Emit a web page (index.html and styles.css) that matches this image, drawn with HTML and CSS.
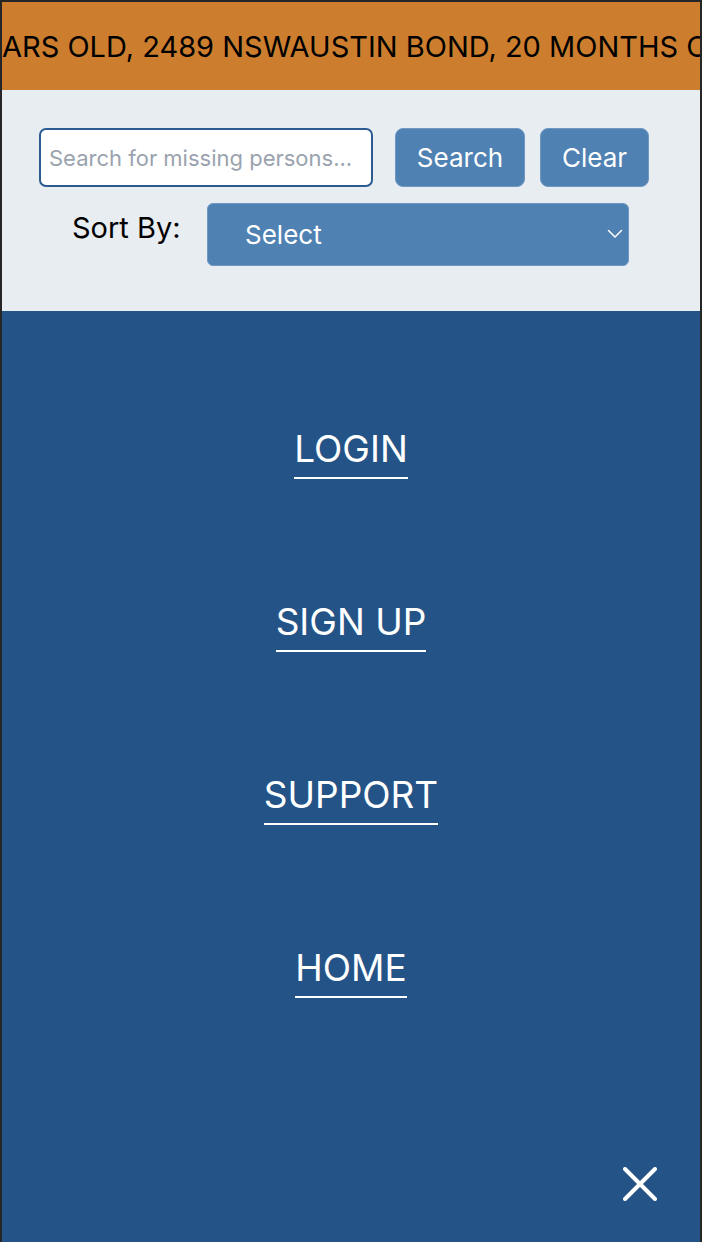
FILE: index.html
```html
<!DOCTYPE html>
<html lang="en">
<head>
<meta charset="utf-8">
<title>Missing Persons</title>
<link rel="stylesheet" href="styles.css">
</head>
<body>
<div class="frame">
  <div class="ticker"><span class="ticker-text">ARS OLD, 2489 NSWAUSTIN BOND, 20 MONTHS OLD, 2170 NSW</span></div>
  <div class="controls">
    <div class="search-row">
      <input class="search-input" type="text" placeholder="Search for missing persons...">
      <button class="btn btn-search">Search</button>
      <button class="btn btn-clear">Clear</button>
    </div>
    <div class="sort-row">
      <span class="sort-label">Sort By:</span>
      <div class="select">
        <span>Select</span>
        <svg class="chev" width="16" height="10" viewBox="0 0 16 10"><path d="M1.5 1.5 L8 8 L14.5 1.5" fill="none" stroke="#fff" stroke-width="1.5" stroke-linecap="round" stroke-linejoin="round"/></svg>
      </div>
    </div>
  </div>
  <nav class="menu">
    <a class="menu-link" href="#">LOGIN</a>
    <a class="menu-link" href="#">SIGN UP</a>
    <a class="menu-link" href="#">SUPPORT</a>
    <a class="menu-link" href="#">HOME</a>
    <button class="close" aria-label="Close">
      <svg width="34" height="34" viewBox="0 0 34 34"><path d="M2 2 L32 32 M32 2 L2 32" stroke="#fff" stroke-width="4" stroke-linecap="round"/></svg>
    </button>
  </nav>
</div>
</body>
</html>
```
FILE: styles.css
```css
html, body {
  margin: 0;
  padding: 0;
  height: 100%;
}
body {
  background: #262626;
  font-family: Inter, "Noto Sans", sans-serif;
}
.frame {
  box-sizing: border-box;
  min-height: 100%;
  padding: 2px 2px 0 2px;
  display: flex;
  flex-direction: column;
}
.ticker {
  background: #cc7e2e;
  height: 88px;
  overflow: hidden;
  white-space: nowrap;
  display: flex;
  align-items: center;
}
.ticker-text {
  font-size: 29px;
  color: #000;
  padding-top: 1px;
}
.controls {
  background: #e8edf2;
  padding: 38px 0 45px 37px;
  display: flex;
  flex-direction: column;
  gap: 16px;
}
.search-row {
  display: flex;
  align-items: center;
}
.search-input {
  box-sizing: border-box;
  width: 334px;
  height: 59px;
  border: 2px solid #2b5b90;
  border-radius: 7px;
  background: #fff;
  padding: 0 0 0 8px;
  font-family: Inter, "Noto Sans", sans-serif;
  font-size: 22px;
  outline: none;
}
.search-input::placeholder {
  color: #9aa3ae;
}
.btn {
  height: 59px;
  border: 1px solid #6e97c2;
  border-radius: 8px;
  background: #4f81b3;
  color: #fff;
  font-family: Inter, "Noto Sans", sans-serif;
  font-size: 26px;
  padding: 0;
}
.btn-search {
  width: 130px;
  margin-left: 22px;
}
.btn-clear {
  width: 109px;
  margin-left: 15px;
}
.sort-row {
  display: flex;
  align-items: center;
  padding-left: 33px;
}
.sort-label {
  font-size: 29px;
  color: #000;
  margin-bottom: 14px;
  width: 135px;
}
.select {
  box-sizing: border-box;
  width: 422px;
  height: 63px;
  border-radius: 6px;
  background: #4f81b3;
  border: 1px solid #6e97c2;
  color: #fff;
  font-size: 26px;
  display: flex;
  align-items: center;
  justify-content: space-between;
  padding: 0 5px 0 37px;
}
.chev {
  display: block;
  margin-top: -1px;
}
.menu {
  flex: 1;
  background: #245487;
  display: flex;
  flex-direction: column;
  align-items: center;
  padding-top: 120px;
  gap: 125px;
}
.menu-link {
  color: #fff;
  text-decoration: none;
  font-size: 37px;
  line-height: 36px;
  padding-bottom: 10px;
  border-bottom: 2px solid #fff;
}
.close {
  margin-top: auto;
  align-self: flex-end;
  margin-right: 43px;
  margin-bottom: 41px;
  background: none;
  border: 0;
  padding: 0;
  width: 34px;
  height: 34px;
}
.close svg {
  display: block;
}
```
